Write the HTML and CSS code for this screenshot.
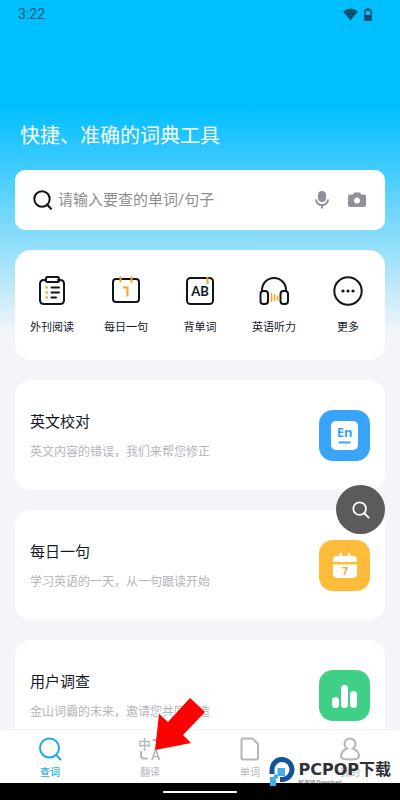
FILE: index.html
```html
<!DOCTYPE html>
<html lang="zh-CN">
<head>
<meta charset="utf-8">
<meta name="viewport" content="width=device-width, initial-scale=1">
<title>词典</title>
<link rel="stylesheet" href="styles.css">
</head>
<body>
<div class="app">
  <header class="status">
    <span class="time">3:22</span>
    <svg class="wifi" viewBox="0 0 15 13" aria-hidden="true"><path d="M0 3.500Q7.500-2.500 15 3.500L7.500 12.500Z"/></svg>
    <svg class="battery" viewBox="0 0 8 13" aria-hidden="true"><path fill-rule="evenodd" d="M2.500 0h3v1.500H7q1 0 1 1V12q0 1-1 1H1q-1 0-1-1V2.500q0-1 1-1h1.500ZM1.500 3v4h5V3Z"/></svg>
  </header>

  <main class="content">
    <h1 class="headline">快捷、准确的词典工具</h1>

    <form class="search">
      <svg class="search-icon" viewBox="0 0 20 20" aria-hidden="true"><circle cx="9" cy="9" r="7.700"/><path d="M14 14.500l4 4.200"/></svg>
      <input class="search-input" type="text" aria-label="查词" placeholder="请输入要查的单词/句子">
      <button class="icon-button" type="button" aria-label="语音">
        <svg class="tool-icon" viewBox="0 0 20 20" aria-hidden="true"><rect x="6" y="1" width="8" height="11" rx="4"/><path class="tool-line" d="M4 9.500a6 5.500 0 0 0 12 0M10 15v3.500"/></svg>
      </button>
      <button class="icon-button" type="button" aria-label="拍照">
        <svg class="tool-icon" viewBox="0 0 20 20" aria-hidden="true"><path fill-rule="evenodd" d="M3 4.500h3L7 2.500h6l1 2h3q2 0 2 2V15q0 2-2 2H3q-2 0-2-2V6.500q0-2 2-2ZM10 7.400a3.100 3.100 0 1 0 .01 0Z"/></svg>
      </button>
    </form>

    <nav class="quick" aria-label="快捷入口">
      <a class="quick-item" href="#">
        <svg class="quick-icon" viewBox="0 0 30 30" aria-hidden="true"><path d="M9 4H7q-4 0-4 4v16q0 4 4 4h16q4 0 4-4V8q0-4-4-4h-2"/><rect x="9" y="1" width="13" height="5" rx="1.500"/><path d="M14.500 11.500h7.500M14.500 16.500h7.500M14.500 21.500h4.500"/><path class="accent flat" d="M8.500 11.500h2.500M8.500 16.500h2.500M8.500 21.500h2.500"/></svg>
        <span>外刊阅读</span>
      </a>
      <a class="quick-item" href="#">
        <svg class="quick-icon" viewBox="0 0 30 30" aria-hidden="true"><rect x="2" y="3" width="26" height="23" rx="3"/><path class="accent flat" d="M9.500 0.500v6M20.500 0.500v6M12 11.500h4.500v9"/></svg>
        <span>每日一句</span>
      </a>
      <a class="quick-item" href="#">
        <svg class="quick-icon" viewBox="0 0 30 30" aria-hidden="true"><rect x="2" y="2" width="26" height="26" rx="3.500"/><path class="accent flat" d="M22.500 1v7"/><text class="ab" x="15" y="20" text-anchor="middle">AB</text></svg>
        <span>背单词</span>
      </a>
      <a class="quick-item" href="#">
        <svg class="quick-icon" viewBox="0 0 30 30" aria-hidden="true"><path d="M3 15v-1a12 12 0 0 1 24 0v1"/><rect x="1.500" y="15" width="7.500" height="13" rx="3"/><rect x="21.500" y="15" width="7.500" height="13" rx="3"/><path class="accent bars" d="M12.500 17v9M15.500 18v7M18.500 19.500v5"/></svg>
        <span>英语听力</span>
      </a>
      <a class="quick-item" href="#">
        <svg class="quick-icon" viewBox="0 0 30 30" aria-hidden="true"><circle cx="15" cy="15" r="13.700"/><circle class="dot" cx="10" cy="15" r="1.600"/><circle class="dot" cx="15" cy="15" r="1.600"/><circle class="dot" cx="20" cy="15" r="1.600"/></svg>
        <span>更多</span>
      </a>
    </nav>

    <a class="card" href="#">
      <div class="card-text"><h2>英文校对</h2><p>英文内容的错误，我们来帮您修正</p></div>
      <svg class="card-icon blue" viewBox="0 0 51 51" aria-hidden="true"><rect x="12" y="11" width="27" height="29" rx="5"/><text class="en" x="25.500" y="27" text-anchor="middle">En</text><path class="en-line" d="M19.500 32.500h12"/></svg>
    </a>
    <a class="card" href="#">
      <div class="card-text"><h2>每日一句</h2><p>学习英语的一天，从一句跟读开始</p></div>
      <svg class="card-icon amber" viewBox="0 0 51 51" aria-hidden="true"><path d="M14 22v-2q0-4 4-4h2.500v-2a1.200 1.200 0 0 1 2.400 0v2h6v-2a1.200 1.200 0 0 1 2.400 0v2H34q4 0 4 4v2ZM14 24.500h24V33q0 5-5 5H19q-5 0-5-5Z"/><text class="seven" x="26" y="35" text-anchor="middle">7</text></svg>
    </a>
    <a class="card" href="#">
      <div class="card-text"><h2>用户调查</h2><p>金山词霸的未来，邀请您共同创造</p></div>
      <svg class="card-icon green" viewBox="0 0 51 51" aria-hidden="true"><rect x="13" y="27" width="7" height="11" rx="3.500"/><rect x="22" y="15" width="7" height="23" rx="3.500"/><rect x="31" y="21" width="7" height="17" rx="3.500"/></svg>
    </a>
  </main>

  <nav class="tabs" aria-label="主导航">
    <a class="tab active" href="#">
      <svg class="tab-icon" viewBox="0 0 24 24" aria-hidden="true"><circle cx="11.500" cy="11" r="9.500"/><path d="M18 18l4.500 4.500"/></svg>
      <span>查词</span>
    </a>
    <a class="tab" href="#">
      <svg class="tab-icon" viewBox="0 0 24 24" aria-hidden="true"><text class="zh" x="0" y="12">中</text><text class="latin" x="13" y="23">A</text><path d="M15.500 3H19q2 0 2 2v4M3 15v3.500q0 3 3 3h3"/></svg>
      <span>翻译</span>
      <svg class="pointer" viewBox="0 0 50 52" aria-hidden="true"><path d="M35 0L50 14L28 37L36 45L0 52L4 16L13 24Z"/></svg>
    </a>
    <a class="tab" href="#">
      <svg class="tab-icon" viewBox="0 0 24 24" aria-hidden="true"><path d="M5 1.500h9.500l5.500 5.500v14q0 1.500-1.500 1.500H5q-1.500 0-1.500-1.500V3q0-1.500 1.500-1.500Z"/></svg>
      <span>单词</span>
    </a>
    <a class="tab" href="#">
      <svg class="tab-icon" viewBox="0 0 24 24" aria-hidden="true"><path d="M9 11.500a5.500 5.500 0 1 1 6 0q6 2.500 6 8Q20.500 22.500 12 22.500T3 19.500q0-5.500 6-8Z"/></svg>
      <span>我的</span>
    </a>
  </nav>
  <footer class="system"><div class="home"></div></footer>

  <button class="float" type="button" aria-label="搜索">
    <svg class="float-icon" viewBox="0 0 20 20" aria-hidden="true"><circle cx="8.500" cy="8.500" r="7"/><path d="M13.500 13.500l5 5"/></svg>
  </button>

  <div class="brand">
    <svg class="brand-logo" viewBox="0 0 26 30" aria-hidden="true"><path class="ring" d="M3 17V13A10 10 0 1 1 13 22.500H11"/><path class="sky" d="M8.500 11h7.500v8h-7.500ZM1 20h6v9H1ZM5 17.500h4v4H5Z"/></svg>
    <div class="brand-text"><strong>PCPOP下载</strong><small>PCPOP Download</small></div>
  </div>
</div>
</body>
</html>
```
FILE: styles.css
```css
* {
  box-sizing: border-box;
}

body {
  margin: 0;
  font-family: Roboto, "Noto Sans CJK SC", sans-serif;
  color: #10182a;
}

a {
  color: inherit;
  text-decoration: none;
}

h1, h2, p {
  margin: 0;
  font-weight: 400;
}

button {
  border: 0;
  padding: 0;
  background: none;
}

svg {
  display: block;
  flex: none;
}

.app {
  position: relative;
  display: flex;
  flex-direction: column;
  height: 100vh;
  overflow: hidden;
  background: linear-gradient(#00bfff 0, #00bfff 106px, #38c9fd 160px, #96e0fa 250px, #f4f5f8 334px);
}

.status {
  display: flex;
  align-items: center;
  gap: 6px;
  height: 28px;
  padding: 0 28px 0 18px;
  color: #075373;
  fill: #075373;
}

.time {
  flex: 1;
  font-size: 14px;
}

.wifi {
  width: 15px;
  height: 13px;
}

.battery {
  width: 8px;
  height: 13px;
}

.content {
  flex: 1;
  display: flex;
  flex-direction: column;
  gap: 20px;
  min-height: 0;
  padding: 94px 15px 0;
  overflow-y: auto;
  scrollbar-width: none;
}

.headline {
  padding-left: 5px;
  font-size: 20px;
  line-height: 28px;
  color: #fff;
}

.search {
  flex: none;
  display: flex;
  align-items: center;
  gap: 15px;
  height: 60px;
  padding: 0 18px;
  border-radius: 10px;
  background: #fff;
}

.search-icon {
  width: 20px;
  height: 20px;
  margin-right: -10px;
  fill: none;
  stroke: #10141f;
  stroke-width: 2;
  stroke-linecap: round;
}

.search-input {
  flex: 1;
  min-width: 0;
  border: 0;
  padding: 0;
  outline: 0;
  background: none;
  font: 15px Roboto, "Noto Sans CJK SC", sans-serif;
}

.search-input::placeholder {
  color: #8c8e93;
}

.tool-icon {
  width: 20px;
  height: 20px;
  fill: #8e9199;
}

.tool-line {
  fill: none;
  stroke: #8e9199;
  stroke-width: 2;
}

.quick {
  flex: none;
  display: grid;
  grid-template-columns: repeat(5, 1fr);
  height: 110px;
  padding-top: 26px;
  border-radius: 16px;
  background: #fff;
}

.quick-item {
  display: flex;
  flex-direction: column;
  align-items: center;
  gap: 14px;
  font-size: 11px;
  line-height: 16px;
}

.quick-icon {
  width: 30px;
  height: 30px;
  fill: none;
  stroke: #10141f;
  stroke-width: 2;
  stroke-linecap: round;
}

.accent {
  stroke: #ffa11a;
}

.flat {
  stroke-linecap: butt;
}

.bars {
  stroke-width: 1.5;
  stroke-linecap: butt;
}

.ab {
  fill: #10141f;
  stroke: none;
  font: 700 13px Lato, sans-serif;
}

.dot {
  fill: #10141f;
  stroke: none;
}

.card {
  flex: none;
  display: flex;
  align-items: center;
  justify-content: space-between;
  height: 110px;
  padding: 0 15px;
  border-radius: 16px;
  background: #fff;
}

.card-text {
  padding-top: 2px;
}

.card h2 {
  font-size: 15px;
  line-height: 24px;
}

.card p {
  margin-top: 8px;
  font-size: 12px;
  line-height: 20px;
  color: #b3b5ba;
}

.card-icon {
  width: 51px;
  height: 51px;
  border-radius: 14px;
  fill: #fff;
}

.blue {
  background: #38a4fa;
}

.amber {
  background: #ffbc3a;
}

.green {
  background: #3fcf86;
}

.en {
  fill: #38a4fa;
  font: 700 13px "Noto Sans", sans-serif;
}

.en-line {
  stroke: #38a4fa;
  stroke-width: 2;
}

.seven {
  fill: #ffa62b;
  font: 700 10px "Noto Sans", sans-serif;
}

.tabs {
  flex: none;
  display: grid;
  grid-template-columns: repeat(4, 1fr);
  height: 54px;
  border-top: 1px solid #f3f3f5;
  background: #fff;
}

.tab {
  position: relative;
  display: flex;
  flex-direction: column;
  align-items: center;
  gap: 5px;
  padding-top: 7px;
  font-size: 10px;
  line-height: 14px;
  color: #b4b6bc;
}

.tab-icon {
  width: 24px;
  height: 24px;
  overflow: visible;
  fill: none;
  stroke: currentColor;
  stroke-width: 2;
  stroke-linecap: round;
}

.active {
  color: #1eabe8;
  font-weight: 500;
}

.zh, .latin {
  fill: currentColor;
  stroke: none;
}

.zh {
  font: 500 13px "Noto Sans CJK SC", sans-serif;
}

.latin {
  font: 500 14px Roboto, sans-serif;
}

.pointer {
  position: absolute;
  z-index: 1;
  left: 55%;
  top: -32px;
  width: 50px;
  height: 52px;
  fill: #fe0000;
}

.system {
  flex: none;
  display: flex;
  align-items: center;
  justify-content: center;
  height: 17px;
  background: #000;
}

.home {
  width: 74px;
  height: 2px;
  border-radius: 1px;
  background: #fff;
}

.float {
  position: absolute;
  right: 15px;
  bottom: 266px;
  display: flex;
  align-items: center;
  justify-content: center;
  width: 49px;
  height: 49px;
  border-radius: 50%;
  background: #5b5b5b;
}

.float-icon {
  width: 18px;
  height: 18px;
  fill: none;
  stroke: #fff;
  stroke-width: 2;
  stroke-linecap: round;
}

.brand {
  position: absolute;
  right: 9px;
  bottom: 13px;
  display: flex;
  align-items: flex-end;
  gap: 3px;
}

.brand-logo {
  width: 26px;
  height: 30px;
}

.ring {
  fill: none;
  stroke: #16549a;
  stroke-width: 5;
}

.sky {
  fill: #45aee8;
}

.brand-text {
  display: flex;
  flex-direction: column;
  padding-bottom: 2px;
  color: #303238;
}

.brand-text strong {
  font: 700 16px/18px "DejaVu Sans", "Noto Sans CJK SC", sans-serif;
}

.brand-text small {
  font: 5px/6px "DejaVu Sans", sans-serif;
}
```
